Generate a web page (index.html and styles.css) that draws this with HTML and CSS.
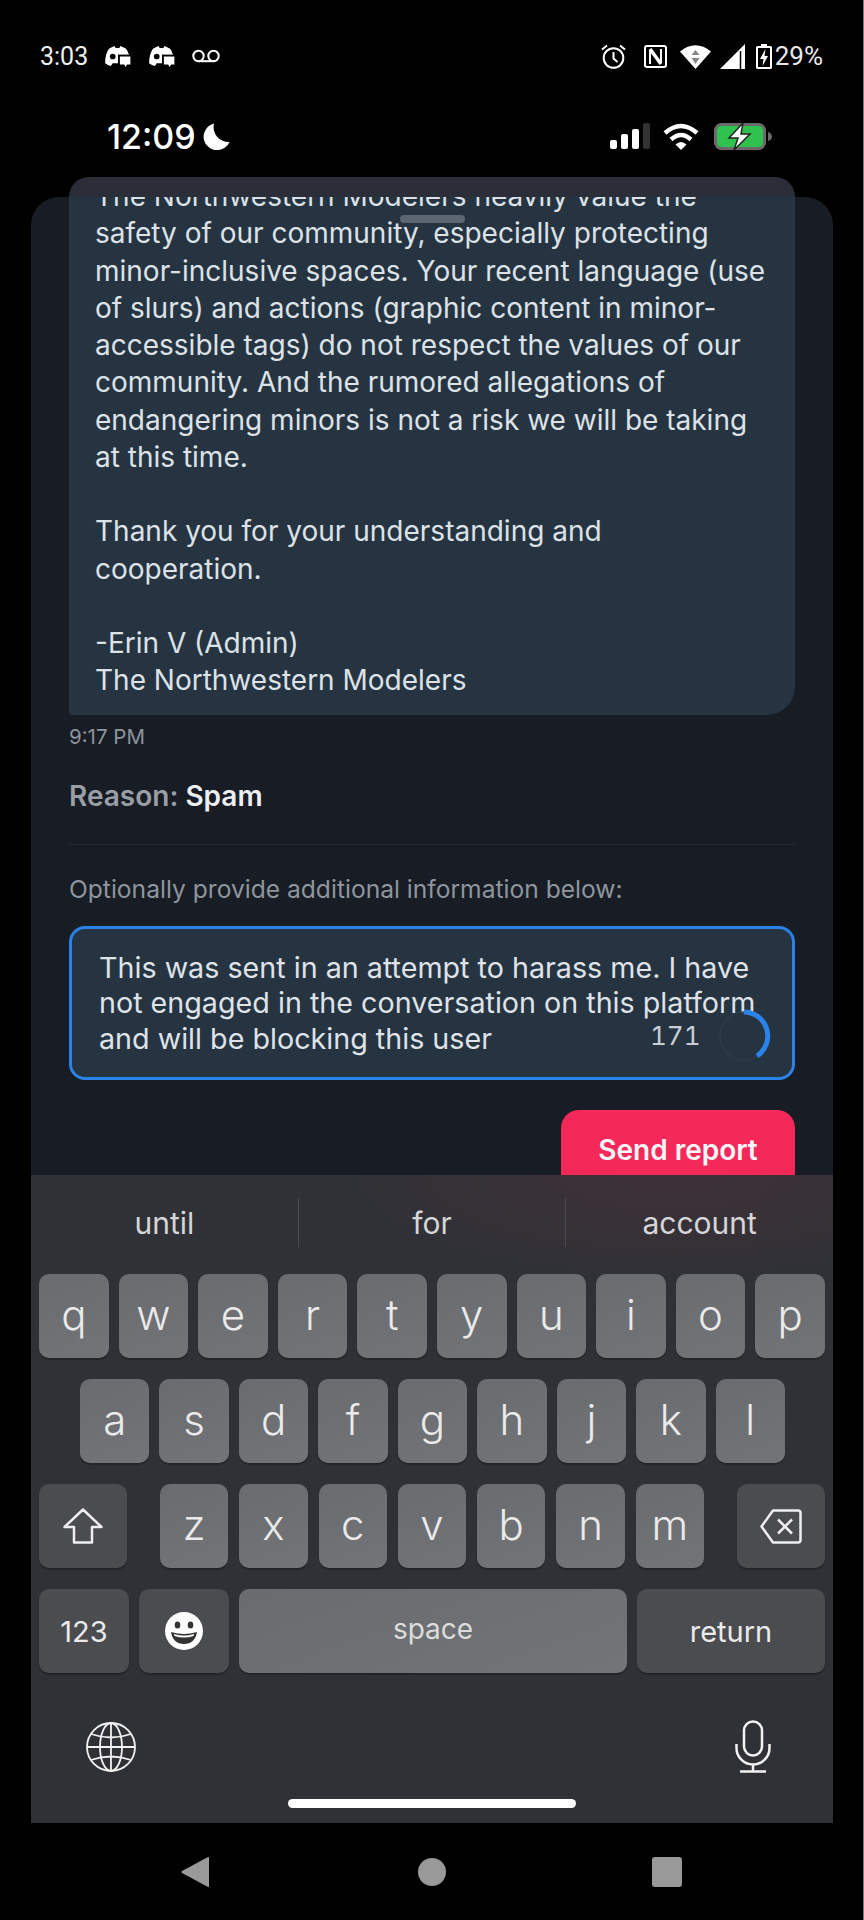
FILE: index.html
```html
<!DOCTYPE html>
<html lang="en">
  <head>
    <meta charset="UTF-8" />
    <title>Send report</title>
    <link rel="stylesheet" href="styles.css">
  </head>
  <body>
    <div class="android-bar">
      <div class="android-left">
        <span class="android-time">3:03</span>
        <svg class="discord" viewBox="0 0 28 22"><path d="M5 3Q8 1 11 0L12 2H16L17 0Q20 1 23 3Q27 8 27 18Q24 20 21 21L19 18H9L7 21Q4 20 1 18Q1 9 5 3Z" fill="#fff"/><circle cx="9" cy="11" r="3" fill="#000"/><path d="M14.500 9H28V22H14.500Z" fill="#000"/><path d="M16.500 11H27.500V19.500H24L22.500 22L21 19.500H16.500Z" fill="#fff"/></svg>
        <svg class="discord" viewBox="0 0 28 22"><path d="M5 3Q8 1 11 0L12 2H16L17 0Q20 1 23 3Q27 8 27 18Q24 20 21 21L19 18H9L7 21Q4 20 1 18Q1 9 5 3Z" fill="#fff"/><circle cx="9" cy="11" r="3" fill="#000"/><path d="M14.500 9H28V22H14.500Z" fill="#000"/><path d="M16.500 11H27.500V19.500H24L22.500 22L21 19.500H16.500Z" fill="#fff"/></svg>
        <svg class="voicemail" viewBox="0 0 28 14"><circle cx="6.500" cy="7" r="5.200" fill="none" stroke="#fff" stroke-width="2"/><circle cx="21.500" cy="7" r="5.200" fill="none" stroke="#fff" stroke-width="2"/><path d="M6.500 12.200H21.500" stroke="#fff" stroke-width="2"/></svg>
      </div>
      <div class="android-right">
        <svg class="alarm" viewBox="0 0 25 25"><circle cx="12.500" cy="14" r="9.800" fill="none" stroke="#fff" stroke-width="2"/><path d="M12.500 8V14.500L16.500 18" fill="none" stroke="#fff" stroke-width="2"/><path d="M1 5.500L6 1.500M24 5.500L19 1.500" stroke="#fff" stroke-width="2"/></svg>
        <svg class="nfc" viewBox="0 0 23 23"><rect x="1" y="1" width="21" height="21" rx="2" fill="none" stroke="#fff" stroke-width="2"/><path d="M6 19V5M17 18V4" stroke="#fff" stroke-width="2"/><path d="M6 4L17 19" stroke="#fff" stroke-width="3.500"/></svg>
        <svg class="android-wifi" viewBox="0 0 31 25"><path d="M15.500 25L0 7.500Q15.500 -5 31 7.500Z" fill="#fff"/><path d="M15.500 6L19.500 11H11.500ZM15.500 20L11.500 14H19.500Z" fill="#888"/></svg>
        <svg class="android-signal" viewBox="0 0 25 25"><path d="M0 25L25 0V25Z" fill="#fff"/><path d="M20.500 7V25" stroke="#000" stroke-width="1.500"/></svg>
        <svg class="android-battery" viewBox="0 0 16 25"><path d="M5 0H11V2H14.500Q16 2 16 3.500V23.500Q16 25 14.500 25H1.500Q0 25 0 23.500V3.500Q0 2 1.500 2H5Z" fill="#fff"/><rect x="2" y="4" width="12" height="19" fill="#000"/><path d="M9.500 5L4 15H7.500L6.500 22L12 12H8.500Z" fill="#fff"/></svg>
        <span class="android-percent">29%</span>
      </div>
    </div>

    <div class="phone">
      <div class="ios-bar">
        <div class="ios-left">
          <span class="ios-time">12:09</span>
          <svg class="moon" viewBox="0 0 27 27"><path d="M11 0.500A13.500 13.500 0 1 0 26.500 19A15 15 0 0 1 11 0.500Z" fill="#fff"/></svg>
        </div>
        <div class="ios-right">
          <div class="bars">
            <span class="bar bar-1"></span>
            <span class="bar bar-2"></span>
            <span class="bar bar-3"></span>
            <span class="bar bar-4"></span>
          </div>
          <svg class="ios-wifi" viewBox="0 0 36 27"><path d="M2 10Q18 -4 34 10" fill="none" stroke="#fff" stroke-width="4.500"/><path d="M8 16.500Q18 7.500 28 16.500" fill="none" stroke="#fff" stroke-width="4.500"/><path d="M18 27L12.500 21.500Q18 16.500 23.500 21.500Z" fill="#fff"/></svg>
          <svg class="ios-battery" viewBox="0 0 58 27"><rect x="1.500" y="1.500" width="49" height="24" rx="6" fill="#2fc24e" stroke="#6a6a6a" stroke-width="3"/><path d="M54 9Q58 10 58 13.500Q58 17 54 18Z" fill="#6a6a6a"/><path d="M29 0L15 15H24L20 27L36 11H27Z" fill="#fff" stroke="#222" stroke-width="1.500"/></svg>
        </div>
      </div>

      <div class="bubble-cap"></div>
      <div class="grabber"></div>

      <div class="sheet">
        <div class="bubble">
          The Northwestern Modelers heavily value the<br>
          safety of our community, especially protecting<br>
          minor-inclusive spaces. Your recent language (use<br>
          of slurs) and actions (graphic content in minor-<br>
          accessible tags) do not respect the values of our<br>
          community. And the rumored allegations of<br>
          endangering minors is not a risk we will be taking<br>
          at this time.<br>
          <br>
          Thank you for your understanding and<br>
          cooperation.<br>
          <br>
          -Erin V (Admin)<br>
          The Northwestern Modelers
        </div>
        <div class="msg-time">9:17 PM</div>
        <div class="reason">Reason: <strong>Spam</strong></div>
        <div class="divider"></div>
        <div class="hint">Optionally provide additional information below:</div>
        <div class="input">
          This was sent in an attempt to harass me. I have<br>
          not engaged in the conversation on this platform<br>
          and will be blocking this user
          <span class="counter">171</span>
          <svg class="spinner" viewBox="0 0 56 56"><circle cx="28" cy="28" r="24" fill="none" stroke="#2d3a48" stroke-width="1.500"/><path d="M28 4A24 24 0 0 1 41 48" fill="none" stroke="#2a83e8" stroke-width="5"/></svg>
        </div>
        <div class="actions">
          <button class="send">Send report</button>
        </div>
      </div>

      <div class="keyboard">
        <div class="suggestions">
          <span class="suggestion">until</span>
          <span class="suggestion">for</span>
          <span class="suggestion">account</span>
        </div>
        <div class="row">
          <span class="key">q</span><span class="key">w</span><span class="key">e</span><span class="key">r</span><span class="key">t</span><span class="key">y</span><span class="key">u</span><span class="key">i</span><span class="key">o</span><span class="key">p</span>
        </div>
        <div class="row row-home">
          <span class="key">a</span><span class="key">s</span><span class="key">d</span><span class="key">f</span><span class="key">g</span><span class="key">h</span><span class="key">j</span><span class="key">k</span><span class="key">l</span>
        </div>
        <div class="row row-lower">
          <span class="key key-dark key-side">
            <svg class="shift" viewBox="0 0 40 36"><path d="M20 1.500L38.500 19H29V34.500H11V19H1.500Z" fill="none" stroke="#eee" stroke-width="2.500" stroke-linejoin="round"/></svg>
          </span>
          <div class="letters">
            <span class="key">z</span><span class="key">x</span><span class="key">c</span><span class="key">v</span><span class="key">b</span><span class="key">n</span><span class="key">m</span>
          </div>
          <span class="key key-dark key-side">
            <svg class="backspace" viewBox="0 0 42 35"><path d="M13 1.500H38Q40.500 1.500 40.500 4V31Q40.500 33.500 38 33.500H13L1.500 17.500Z" fill="none" stroke="#eee" stroke-width="2.500" stroke-linejoin="round"/><path d="M18 10.500L32 24.500M32 10.500L18 24.500" stroke="#eee" stroke-width="2.500"/></svg>
          </span>
        </div>
        <div class="row row-bottom">
          <span class="key key-dark key-num">123</span>
          <span class="key key-dark key-num">
            <svg class="emoji" viewBox="0 0 38 38"><circle cx="19" cy="19" r="19" fill="#fff"/><ellipse cx="12.500" cy="13" rx="2.800" ry="3.600" fill="#333"/><ellipse cx="25.500" cy="13" rx="2.800" ry="3.600" fill="#333"/><path d="M6 20Q19 24 32 20Q30 32 19 32Q8 32 6 20Z" fill="#333"/><path d="M9 22Q19 25 29 22L28.500 24Q19 27 9.500 24Z" fill="#fff"/></svg>
          </span>
          <span class="key key-space">space</span>
          <span class="key key-dark key-return">return</span>
        </div>
        <div class="kb-tools">
          <svg class="globe" viewBox="0 0 50 50"><g fill="none" stroke="#f2f2f2" stroke-width="1.800"><circle cx="25" cy="25" r="24"/><ellipse cx="25" cy="25" rx="11" ry="24"/><path d="M25 1V49M1 25H49M5 12Q25 19 45 12M5 38Q25 31 45 38"/></g></svg>
          <svg class="mic" viewBox="0 0 36 53"><g fill="none" stroke="#f2f2f2" stroke-width="2.500"><rect x="9" y="1.500" width="18" height="34" rx="9"/><path d="M1.500 24V28A16.500 16.500 0 0 0 34.500 28V24M18 44.500V51.500M5 51.500H31"/></g></svg>
        </div>
        <div class="home-bar"></div>
      </div>
    </div>

    <div class="nav">
      <svg class="nav-back" viewBox="0 0 28 32"><path d="M27 1Q28 0.500 28 2V30Q28 31.500 27 31L1 17Q0 16 1 15Z" fill="#999"/></svg>
      <span class="nav-home"></span>
      <span class="nav-recent"></span>
    </div>
  </body>
</html>
```

FILE: styles.css
```css
* {
  box-sizing: border-box;
}
body {
  margin: 0;
  width: 864px;
  height: 1920px;
  overflow: hidden;
  background: #000;
  box-shadow: inset -1px 0 0 #777;
  font-family: Inter, "Liberation Sans", sans-serif;
  color: #fff;
  display: flex;
  flex-direction: column;
}
svg {
  display: block;
  flex: none;
}

/* android status bar */
.android-bar {
  height: 100px;
  padding: 42px 41px 0 40px;
  display: flex;
  justify-content: space-between;
  align-items: flex-start;
}
.android-left,
.android-right {
  height: 28px;
  display: flex;
  align-items: center;
}
.android-time {
  font-family: Roboto, sans-serif;
  font-size: 25px;
  width: 64px;
  color: #f0f0f0;
}
.discord {
  width: 27px;
  height: 21px;
  margin-right: 17px;
}
.voicemail {
  width: 28px;
  height: 14px;
}
.alarm {
  width: 25px;
  height: 25px;
  margin-right: 18px;
}
.nfc {
  width: 23px;
  height: 23px;
  margin-right: 13px;
}
.android-wifi {
  width: 31px;
  height: 25px;
  margin-right: 9px;
}
.android-signal {
  width: 25px;
  height: 25px;
  margin-right: 11px;
}
.android-battery {
  width: 16px;
  height: 25px;
  margin-right: 3px;
}
.android-percent {
  font-family: Roboto, sans-serif;
  font-size: 26px;
  color: #e8e8e8;
}

/* captured phone */
.phone {
  position: relative;
  margin: 0 31px;
  height: 1723px;
  display: flex;
  flex-direction: column;
}
.ios-bar {
  height: 77px;
  padding: 16px 61px 0 76px;
  display: flex;
  justify-content: space-between;
  align-items: flex-start;
}
.ios-left,
.ios-right {
  height: 40px;
  display: flex;
  align-items: center;
}
.ios-time {
  font-size: 34px;
  font-weight: 500;
  margin-right: 7px;
}
.moon {
  width: 27px;
  height: 27px;
}
.bars {
  display: flex;
  align-items: flex-end;
  gap: 4px;
  height: 26px;
  margin-right: 13px;
}
.bar {
  width: 7px;
  border-radius: 2px;
  background: #fff;
}
.bar-1 {
  height: 9px;
}
.bar-2 {
  height: 15px;
}
.bar-3 {
  height: 20px;
}
.bar-4 {
  height: 26px;
  background: #333;
}
.ios-wifi {
  width: 36px;
  height: 27px;
  margin-right: 15px;
}
.ios-battery {
  width: 58px;
  height: 27px;
}

.bubble-cap {
  height: 20px;
  margin: 0 38px;
  border-radius: 20px 20px 0 0;
  background: #2b2e38;
}
.grabber {
  position: absolute;
  left: 369px;
  top: 115px;
  width: 65px;
  height: 8px;
  border-radius: 4px;
  background: #5c6672;
  z-index: 2;
}
.sheet {
  flex: 1;
  min-height: 0;
  overflow: hidden;
  padding: 0 38px;
  border-radius: 28px 28px 0 0;
  background: #171c25;
}
.bubble {
  margin-top: -19px;
  padding: 0 20px 15px 26px;
  font-size: 28px;
  line-height: 37.250px;
  color: #dde2e7;
  background: #263442;
  border-radius: 0 0 28px 4px;
}
.msg-time {
  margin-top: 10px;
  font-size: 20.500px;
  line-height: 24px;
  color: #8e949c;
}
.reason {
  margin-top: 31px;
  font-size: 28px;
  line-height: 32px;
  font-weight: 600;
  color: #9a9fa6;
}
.reason strong {
  font-weight: 600;
  color: #eceef0;
}
.divider {
  margin-top: 32px;
  height: 1px;
  background: #222932;
}
.hint {
  margin-top: 29px;
  font-size: 24.600px;
  line-height: 30px;
  color: #8f959d;
}
.input {
  position: relative;
  margin-top: 22px;
  height: 154px;
  padding: 21px 10px 0 27px;
  font-size: 28.700px;
  line-height: 35.500px;
  color: #dfe3e8;
  background: #263442;
  border: 3px solid #2a83e8;
  border-radius: 16px;
}
.counter {
  position: absolute;
  left: 578px;
  top: 92px;
  font-size: 26px;
  line-height: 30px;
  font-feature-settings: "tnum";
  color: #c8ced5;
}
.spinner {
  position: absolute;
  left: 644px;
  top: 79px;
  width: 56px;
  height: 56px;
}
.actions {
  margin-top: 30px;
  display: flex;
  justify-content: flex-end;
}
.send {
  width: 234px;
  height: 80px;
  border: none;
  border-radius: 18px;
  background: #f5285a;
  color: #f6f6f6;
  font-family: inherit;
  font-size: 28px;
  font-weight: 600;
}

/* keyboard */
.keyboard {
  height: 648px;
  background: radial-gradient(ellipse 320px 100px at 640px 0, rgba(245, 40, 90, 0.08), transparent), #303136;
}
.suggestions {
  height: 99px;
  padding-top: 23px;
  display: flex;
}
.suggestion {
  flex: 1;
  height: 49px;
  display: flex;
  align-items: center;
  justify-content: center;
  font-size: 30px;
  font-weight: 400;
  color: #d6d6d8;
  border-left: 1px solid #4a4b50;
}
.suggestion:first-child {
  border-left: none;
}
.row {
  height: 84px;
  margin-bottom: 21px;
  padding: 0 8px;
  display: flex;
  gap: 10px;
}
.row-home {
  padding: 0 48px 0 49px;
}
.row-lower {
  justify-content: space-between;
}
.row-bottom {
  margin-bottom: 0;
}
.letters {
  width: 544px;
  display: flex;
  gap: 11px;
}
.key {
  flex: 1;
  display: flex;
  align-items: center;
  justify-content: center;
  border-radius: 10px;
  background: linear-gradient(160deg, #6a6b6f, #737477);
  box-shadow: 0 2px 1px rgba(0, 0, 0, 0.25);
  font-size: 42px;
  font-weight: 300;
  color: #eaeaea;
  padding-bottom: 3px;
}
.key-dark {
  background: #4b4c50;
}
.key-side {
  flex: none;
  width: 88px;
  padding-bottom: 0;
}
.key-num {
  flex: none;
  width: 90px;
  font-size: 29px;
  font-weight: 400;
  padding-bottom: 0;
}
.key-space {
  font-size: 28px;
  font-weight: 400;
  color: #dcdcdc;
  padding-bottom: 4px;
}
.key-return {
  flex: none;
  width: 188px;
  font-size: 29px;
  font-weight: 400;
  padding-bottom: 0;
}
.shift {
  width: 40px;
  height: 36px;
}
.backspace {
  width: 42px;
  height: 35px;
}
.emoji {
  width: 38px;
  height: 38px;
}
.kb-tools {
  margin-top: 47px;
  padding: 0 62px 0 55px;
  height: 53px;
  display: flex;
  justify-content: space-between;
  align-items: center;
}
.globe {
  width: 50px;
  height: 50px;
}
.mic {
  width: 36px;
  height: 53px;
}
.home-bar {
  width: 288px;
  height: 9px;
  margin: 26px auto 0;
  border-radius: 5px;
  background: #fff;
}

/* android nav */
.nav {
  flex: 1;
  display: flex;
  align-items: center;
}
.nav-back {
  width: 28px;
  height: 32px;
  margin-left: 181px;
}
.nav-home {
  width: 28px;
  height: 28px;
  margin-left: 209px;
  border-radius: 50%;
  background: #999;
}
.nav-recent {
  width: 30px;
  height: 30px;
  margin-left: 206px;
  border-radius: 3px;
  background: #999;
}
```
